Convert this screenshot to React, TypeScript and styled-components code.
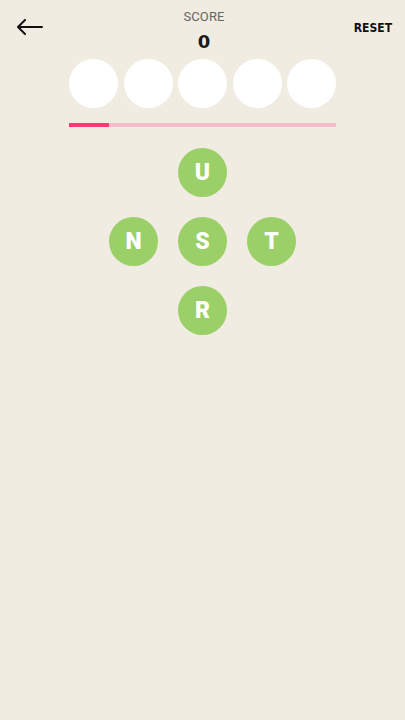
import React from 'react'
import styled, { createGlobalStyle } from 'styled-components'

const GlobalStyle = createGlobalStyle`
  html, body {
    margin: 0;
    padding: 0;
    background: #f0ece1;
  }
  body {
    font-family: Roboto, "Liberation Sans", sans-serif;
  }
`

const slots = ['', '', '', '', '']

// cross layout: null means an empty cell
const tiles: (string | null)[] = [null, 'U', null, 'N', 'S', 'T', null, 'R', null]

const progress = 0.15

const BackArrow = () => (
  <svg width="27" height="16" viewBox="0 0 27 16" fill="none">
    <path d="M26 8H2M9 1L2 8l7 7" stroke="#111" strokeWidth="2" strokeLinecap="round" strokeLinejoin="round" />
  </svg>
)

const App = () => {
  return (
    <Page>
      <GlobalStyle />
      <Header>
        <BackButton aria-label="back">
          <BackArrow />
        </BackButton>
        <ScoreBox>
          <ScoreLabel>SCORE</ScoreLabel>
          <ScoreValue>0</ScoreValue>
        </ScoreBox>
        <ResetButton>RESET</ResetButton>
      </Header>

      <SlotRow>
        {slots.map((s, i) => (
          <Slot key={i}>{s}</Slot>
        ))}
      </SlotRow>

      <Track>
        <Fill style={{ width: `${progress * 100}%` }} />
      </Track>

      <TileGrid>
        {tiles.map((t, i) => (t ? <Tile key={i}>{t}</Tile> : <Empty key={i} />))}
      </TileGrid>
    </Page>
  )
}

export default App

const Page = styled.div`
  width: 405px;
  min-height: 720px;
  background: #f0ece1;
  display: flex;
  flex-direction: column;
  align-items: center;
`

const Header = styled.div`
  width: 100%;
  box-sizing: border-box;
  display: grid;
  grid-template-columns: 1fr auto 1fr;
  align-items: start;
  padding: 9px 13px 0 16px;
`

const BackButton = styled.button`
  justify-self: start;
  background: none;
  border: none;
  padding: 0;
  margin-top: 10px;
  display: flex;
  cursor: pointer;
`

const ScoreBox = styled.div`
  display: flex;
  flex-direction: column;
  align-items: center;
`

const ScoreLabel = styled.div`
  font-size: 13px;
  line-height: 16px;
  color: #666;
  letter-spacing: 0.1px;
`

const ScoreValue = styled.div`
  margin-top: 6px;
  font-family: "DejaVu Sans", sans-serif;
  font-size: 18px;
  line-height: 22px;
  font-weight: 700;
  color: #1a1a1a;
`

const ResetButton = styled.button`
  justify-self: end;
  background: none;
  border: none;
  padding: 0;
  margin-top: 12px;
  font-family: "DejaVu Sans Condensed", "DejaVu Sans", sans-serif;
  font-stretch: condensed;
  font-weight: 700;
  font-size: 12px;
  line-height: 14px;
  color: #111;
  cursor: pointer;
`

const SlotRow = styled.div`
  display: flex;
  gap: 5.5px;
  margin-top: 6px;
`

const Slot = styled.div`
  width: 49px;
  height: 49px;
  border-radius: 50%;
  background: #ffffff;
`

const Track = styled.div`
  width: 267px;
  height: 4px;
  margin-top: 15px;
  background: #f5bccb;
  overflow: hidden;
`

const Fill = styled.div`
  height: 100%;
  background: #fb3b78;
`

const TileGrid = styled.div`
  display: grid;
  grid-template-columns: repeat(3, 49px);
  grid-auto-rows: 49px;
  gap: 20px;
  margin-top: 21px;
`

const Tile = styled.button`
  width: 49px;
  height: 49px;
  border-radius: 50%;
  border: none;
  padding: 0;
  background: #9bcf68;
  color: #ffffff;
  font-family: Roboto, "Liberation Sans", sans-serif;
  font-weight: 900;
  font-size: 23px;
  display: flex;
  align-items: center;
  justify-content: center;
  cursor: pointer;
`

const Empty = styled.div``
